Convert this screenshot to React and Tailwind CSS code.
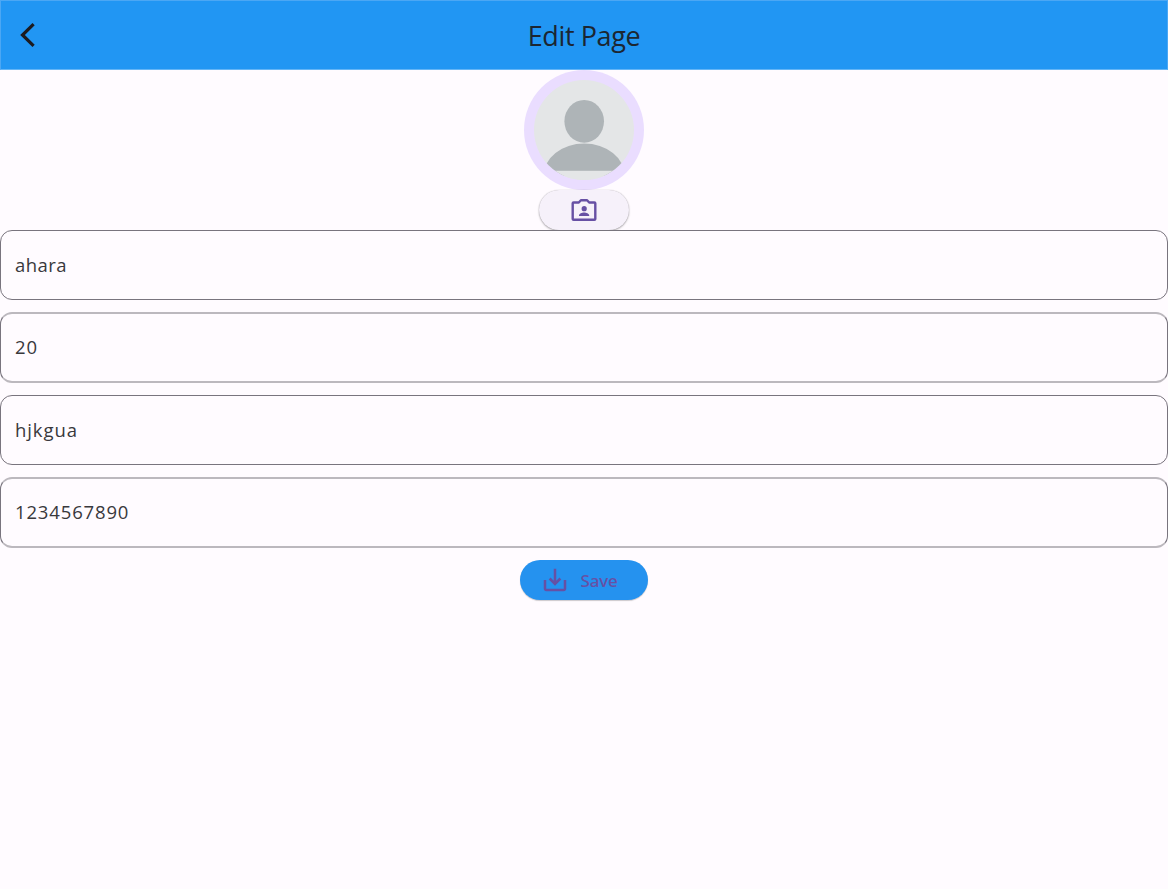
import React from 'react';

const fields = [
  { value: 'ahara', box: 'h-[70px] border mb-3 pb-0.5 tracking-[0.45px]' },
  { value: '20', box: 'h-[71px] border-x border-y-2 border-y-[#bcb8be] mb-3 pb-0.5 tracking-[0.8px]' },
  { value: 'hjkgua', box: 'h-[70px] border mb-3 pb-0.5 tracking-[0.9px]' },
  { value: '1234567890', box: 'h-[71px] border-x border-y-2 border-y-[#bcb8be] pb-0.5 tracking-[0.85px]' },
];

function Avatar() {
  return (
    <svg className="block size-[120px] shrink-0" viewBox="0 0 120 120">
      <defs>
        <clipPath id="portrait">
          <circle cx="60" cy="60" r="50" />
        </clipPath>
      </defs>
      <circle cx="60" cy="60" r="60" fill="#eaddff" />
      <g clipPath="url(#portrait)">
        <rect width="120" height="120" fill="#e4e6e7" />
        <g fill="#aeb4b7">
          <ellipse cx="60.2" cy="51.3" rx="19.8" ry="21.4" />
          <path d="M19.6 105.7a40.4 32 0 0 1 81.2 0z" />
        </g>
        <rect y="100.8" width="120" height="20" fill="#e4e6e7" />
      </g>
    </svg>
  );
}

function CameraIcon() {
  return (
    <svg className="block h-6 w-7" viewBox="0 0 28 24" fill="#6750a4">
      <path
        d="M3.6 4.5h5.2l2.1-2.3h6.2l2.1 2.3h5.2q.9 0 .9.8v15.6q0 .8-.9.8H3.6q-.9 0-.9-.8V5.3q0-.8.9-.8z"
        fill="none"
        stroke="#6750a4"
        strokeWidth="2.4"
        strokeLinejoin="round"
      />
      <circle cx="14.2" cy="10.7" r="2.6" />
      <path d="M9 18v-.7c0-1.8 3-2.9 5.1-2.9s5.1 1.1 5.1 2.9v.7z" />
    </svg>
  );
}

export default function App() {
  return (
    <div className="flex h-[889px] w-full flex-col bg-[#fffbff] font-['Open_Sans','Noto_Sans',sans-serif] text-[#1c1b1f]">
      <header className="grid h-[70px] shrink-0 grid-cols-[1fr_auto_1fr] items-center border border-[#4ba7f4] border-b-[#64b5f6] bg-[#2196f3]">
        <button aria-label="Back" className="ml-[17px] w-5">
          <svg className="block h-[30px] w-5" viewBox="0 0 20 30">
            <path d="M15.6 4.2 4.5 15l11.1 10.8" fill="none" stroke="#1c1b1f" strokeWidth="3.2" />
          </svg>
        </button>
        <h1 className="pt-0.5 text-[27px] leading-9 font-normal tracking-[-0.4px] text-[#1c2631]">Edit Page</h1>
      </header>
      <main className="flex flex-col items-center">
        <Avatar />
        <button
          aria-label="Choose photo"
          className="flex h-10 w-[90px] items-center justify-center rounded-full bg-[#f6f1fa] shadow-[0_1px_2px_rgba(0,0,0,0.3),0_0_1px_rgba(0,0,0,0.25)]"
        >
          <CameraIcon />
        </button>
        <div className="relative flex w-full flex-col">
          {fields.map(({ value, box }) => (
            <input
              key={value}
              defaultValue={value}
              className={`${box} w-full rounded-xl border-x-[#79747e] border-[#79747e] bg-[#fffbff] px-3.5 text-[18.5px] font-normal text-[#39383c] outline-none`}
            />
          ))}
        </div>
        <button className="mt-3 flex h-10 w-32 items-center rounded-full bg-[#2592ef] pl-5 text-[#6750a4] shadow-[0_1px_1px_rgba(0,0,0,0.2)]">
          <svg className="size-[30px]" viewBox="0 0 24 24" fill="currentColor">
            <path d="M19 12v7H5v-7H3v7c0 1.1.9 2 2 2h14c1.1 0 2-.9 2-2v-7h-2zm-6 .67 2.59-2.58L17 11.5l-5 5-5-5 1.41-1.41L11 12.67V3h2v9.67z" />
          </svg>
          <span className="ml-[10.5px] pt-px font-['Noto_Sans'] text-[17px] font-medium tracking-[-0.2px]">Save</span>
        </button>
      </main>
    </div>
  );
}
